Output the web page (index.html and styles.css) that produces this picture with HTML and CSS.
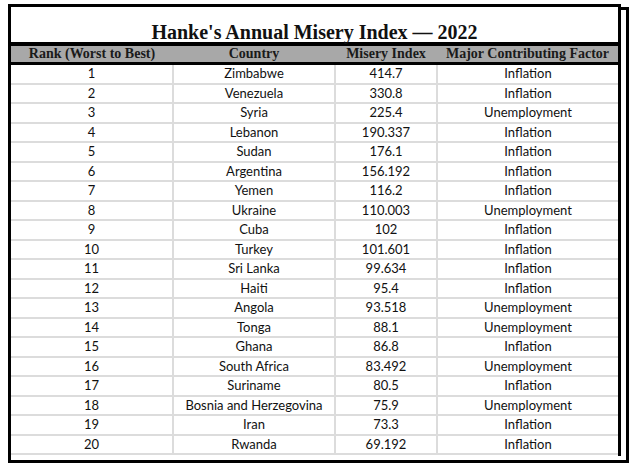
FILE: index.html
```html
<!DOCTYPE html>
<html>
<head>
<meta charset="utf-8">
<link rel="stylesheet" href="styles.css">
</head>
<body>
<div class="page">
  <div class="back-frame"></div>
  <div class="frame">
    <h1 class="title">Hanke's Annual Misery Index — 2022</h1>
    <table class="grid">
      <colgroup>
        <col class="c1"><col class="c2"><col class="c3"><col class="c4">
      </colgroup>
      <thead>
        <tr><th>Rank (Worst to Best)</th><th>Country</th><th>Misery Index</th><th>Major Contributing Factor</th></tr>
      </thead>
      <tbody>
        <tr><td>1</td><td>Zimbabwe</td><td>414.7</td><td>Inflation</td></tr>
        <tr><td>2</td><td>Venezuela</td><td>330.8</td><td>Inflation</td></tr>
        <tr><td>3</td><td>Syria</td><td>225.4</td><td>Unemployment</td></tr>
        <tr><td>4</td><td>Lebanon</td><td>190.337</td><td>Inflation</td></tr>
        <tr><td>5</td><td>Sudan</td><td>176.1</td><td>Inflation</td></tr>
        <tr><td>6</td><td>Argentina</td><td>156.192</td><td>Inflation</td></tr>
        <tr><td>7</td><td>Yemen</td><td>116.2</td><td>Inflation</td></tr>
        <tr><td>8</td><td>Ukraine</td><td>110.003</td><td>Unemployment</td></tr>
        <tr><td>9</td><td>Cuba</td><td>102</td><td>Inflation</td></tr>
        <tr><td>10</td><td>Turkey</td><td>101.601</td><td>Inflation</td></tr>
        <tr><td>11</td><td>Sri Lanka</td><td>99.634</td><td>Inflation</td></tr>
        <tr><td>12</td><td>Haiti</td><td>95.4</td><td>Inflation</td></tr>
        <tr><td>13</td><td>Angola</td><td>93.518</td><td>Unemployment</td></tr>
        <tr><td>14</td><td>Tonga</td><td>88.1</td><td>Unemployment</td></tr>
        <tr><td>15</td><td>Ghana</td><td>86.8</td><td>Inflation</td></tr>
        <tr><td>16</td><td>South Africa</td><td>83.492</td><td>Unemployment</td></tr>
        <tr><td>17</td><td>Suriname</td><td>80.5</td><td>Inflation</td></tr>
        <tr><td>18</td><td>Bosnia and Herzegovina</td><td>75.9</td><td>Unemployment</td></tr>
        <tr><td>19</td><td>Iran</td><td>73.3</td><td>Inflation</td></tr>
        <tr><td>20</td><td>Rwanda</td><td>69.192</td><td>Inflation</td></tr>
      </tbody>
    </table>
  </div>
</div>
</body>
</html>
```
FILE: styles.css
```css
html, body {
  margin: 0;
  padding: 0;
}
html {
  background: #fff;
}
.page {
  position: relative;
  height: 464px;
  box-sizing: border-box;
  padding: 4px 0 0 8px;
}
.back-frame {
  position: absolute;
  left: 8px;
  top: 7px;
  width: 615px;
  height: 450px;
  border: 3px solid #000;
}
.frame {
  position: relative;
  z-index: 1;
  width: 607px;
  height: 449px;
  border: 3px solid #000;
  border-bottom: none;
  background: #fff;
}
.title {
  margin: 0;
  height: 35px;
  box-sizing: border-box;
  padding-top: 15px;
  text-align: center;
  font-family: "Liberation Serif", serif;
  font-weight: bold;
  font-size: 20px;
  line-height: 20px;
  color: #111;
}
.grid {
  width: 607px;
  border-collapse: collapse;
  table-layout: fixed;
}
.c1 { width: 162px; }
.c2 { width: 162px; }
.c3 { width: 102px; }
.c4 { width: 181px; }
.grid th {
  height: 16px;
  padding: 0;
  background: #a8a8a8;
  border-top: 4px solid #000;
  border-bottom: 3px solid #000;
  font-family: "Liberation Serif", serif;
  font-weight: bold;
  font-size: 14px;
  line-height: 16px;
  color: #1a1a1a;
  text-align: center;
}
.grid td {
  height: 17.5px;
  padding: 0;
  border: 2px solid #dcdcdc;
  border-top: none;
  font-family: Lato, "Open Sans", sans-serif;
  font-size: 13px;
  line-height: 17px;
  color: #111;
  text-align: center;
}
.grid td:first-child { border-left: none; }
.grid td:last-child { border-right: none; }
```
